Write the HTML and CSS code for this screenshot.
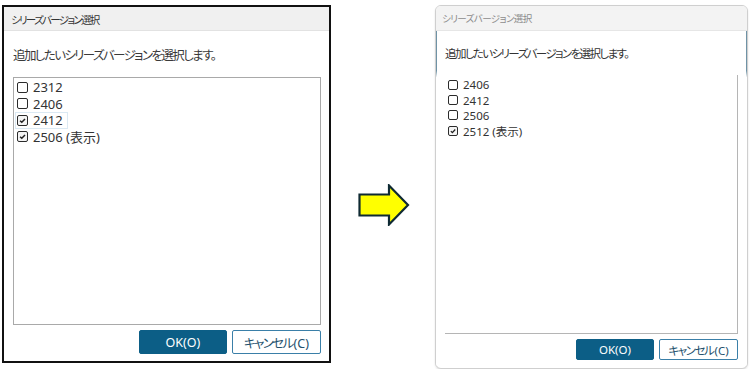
FILE: index.html
```html
<!DOCTYPE html>
<html lang="ja">
  <head>
    <meta charset="UTF-8" />
    <title>シリーズバージョン選択</title>
    <link rel="stylesheet" href="styles.css">
  </head>
  <body>
    <div class="dialog old">
      <div class="title">シリーズバージョン選択</div>
      <div class="content">
        <p class="lead">追加したいシリーズバージョンを選択します。</p>
        <div class="list">
          <div class="item"><span class="box"></span>2312</div>
          <div class="item"><span class="box"></span>2406</div>
          <div class="item focus"><span class="box on"><svg viewBox="0 0 10 10"><path d="M2.3 5.2 4.2 7 7.8 3.2" /></svg></span>2412</div>
          <div class="item"><span class="box on"><svg viewBox="0 0 10 10"><path d="M2.3 5.2 4.2 7 7.8 3.2" /></svg></span>2506 (表示)</div>
        </div>
        <div class="actions">
          <button class="btn btn-primary">OK(O)</button>
          <button class="btn btn-secondary"><span class="kana">キャンセル</span>(C)</button>
        </div>
      </div>
    </div>

    <div class="arrow">
      <svg viewBox="0 0 52 42" width="52" height="42">
        <path d="M1.5 10.5H31V1.5L50 21 31 40.5V31.5H1.5Z" fill="#ffff00" stroke="#0f2a33" stroke-width="2.2" stroke-linejoin="miter" />
      </svg>
    </div>

    <div class="dialog new">
      <div class="title">シリーズバージョン選択</div>
      <div class="content">
        <p class="lead">追加したいシリーズバージョンを選択します。</p>
        <div class="list">
          <div class="item"><span class="box"></span>2406</div>
          <div class="item"><span class="box"></span>2412</div>
          <div class="item"><span class="box"></span>2506</div>
          <div class="item"><span class="box on"><svg viewBox="0 0 10 10"><path d="M2.3 5.2 4.2 7 7.8 3.2" /></svg></span>2512 (表示)</div>
        </div>
        <div class="actions">
          <button class="btn btn-primary">OK(O)</button>
          <button class="btn btn-secondary"><span class="kana">キャンセル</span>(C)</button>
        </div>
      </div>
    </div>
  </body>
</html>
```

FILE: styles.css
```css
body {
  margin: 0;
  padding: 5px 0 0 2px;
  display: flex;
  align-items: flex-start;
  font-family: "Noto Sans", "Noto Sans CJK JP", sans-serif;
  font-feature-settings: "palt" 1;
  color: #333;
  background: white;
}

.dialog {
  display: flex;
  flex-direction: column;
  box-sizing: border-box;
  background: white;
}

.title {
  box-sizing: border-box;
  background: #f0f0f0;
  border-bottom: 1px solid #e2e2e2;
  white-space: nowrap;
}

.content {
  flex: 1;
  display: flex;
  flex-direction: column;
}

.lead {
  margin: 0;
  white-space: nowrap;
}

.list {
  box-sizing: border-box;
  display: flex;
  flex-direction: column;
}

.item {
  display: flex;
  align-items: center;
  align-self: flex-start;
  box-sizing: border-box;
  border: 1px solid transparent;
  white-space: nowrap;
}

.box {
  box-sizing: border-box;
  border: 1.5px solid #2b2b2b;
  border-radius: 2px;
  display: inline-flex;
  background: white;
}

.box svg {
  width: 100%;
  height: 100%;
  fill: none;
  stroke: #222;
  stroke-width: 1.6;
}

.box.on {
  background: #f4f4f4;
}

.actions {
  display: flex;
  justify-content: flex-end;
  gap: 5px;
}

.btn {
  box-sizing: border-box;
  font-family: "Noto Sans", "Noto Sans CJK JP", sans-serif;
  font-feature-settings: "palt" 1;
  border-radius: 2px;
  padding: 0;
  cursor: pointer;
  white-space: nowrap;
}

.btn-primary {
  background: #0c5e86;
  border: 1px solid #0c5e86;
  color: white;
}

.btn-secondary {
  background: white;
  border: 1px solid #3a7fa8;
  color: #24506c;
}

/* left: old dialog */
.old {
  width: 329px;
  height: 358px;
  border: 2px solid #111;
}

.old .title {
  height: 26px;
  padding: 5px 0 0 7px;
  font-size: 10.5px;
  color: #333;
  letter-spacing: -1.7px;
}

.old .content {
  padding: 17px 8px 7px 9px;
}

.old .lead {
  font-size: 12.5px;
  line-height: 16px;
  color: #3a3a3a;
  letter-spacing: -1.6px;
}

.old .list {
  margin-top: 13px;
  height: 248px;
  border: 1px solid #a9a9a9;
  padding: 1px 0 0 1px;
}

.old .item {
  height: 16.5px;
  font-size: 13px;
  padding-right: 4px;
}

.old .item.focus {
  border-color: #dbe9f3;
}

.old .box {
  width: 11px;
  height: 11px;
  margin: 0 5px 0 1px;
}

.old .actions {
  margin-top: 5px;
}

.old .btn {
  height: 24px;
  font-size: 12.5px;
}

.old .btn-primary {
  width: 88px;
}

.old .btn-secondary {
  width: 89px;
}

.old .btn-secondary .kana {
  letter-spacing: -1.6px;
  margin-right: 1px;
}

/* arrow */
.arrow {
  margin: 179px 25px 0 27px;
  display: flex;
}

/* right: new dialog */
.new {
  width: 313px;
  height: 364px;
  border: 1px solid #cfcfcf;
  border-radius: 6px;
  overflow: hidden;
  box-shadow: 0 1px 2px rgba(0, 0, 0, 0.12);
}

.new .title {
  height: 25px;
  padding: 5px 0 0 6px;
  font-size: 9.5px;
  color: #8c8c8c;
  background: #f3f3f3;
  border-bottom: 1px solid #e6e6e6;
  letter-spacing: -0.6px;
}

.new .content {
  padding: 15px 8px 8px 8px;
  border-left: 1px solid #7f9faf;
  border-right: 1px solid #7f9faf;
  border-image: linear-gradient(#6f93a6 0%, #6f93a6 12%, white 14%) 1;
}

.new .lead {
  font-size: 11.5px;
  line-height: 16px;
  color: #333;
  letter-spacing: -1.6px;
}

.new .list {
  margin-top: 13px;
  height: 259px;
  border-right: 1px solid #b5b5b5;
  border-bottom: 1px solid #b5b5b5;
  padding: 2px 0 0 1px;
}

.new .item {
  height: 15.4px;
  font-size: 11.5px;
}

.new .box {
  width: 10px;
  height: 10px;
  margin: 0 5px 0 1px;
}

.new .actions {
  margin-top: 5px;
}

.new .btn {
  height: 21px;
  font-size: 11.5px;
}

.new .btn-primary {
  width: 78px;
}

.new .btn-secondary {
  width: 79px;
}

.new .btn-secondary .kana {
  letter-spacing: -1.4px;
  margin-right: 1px;
}
```
